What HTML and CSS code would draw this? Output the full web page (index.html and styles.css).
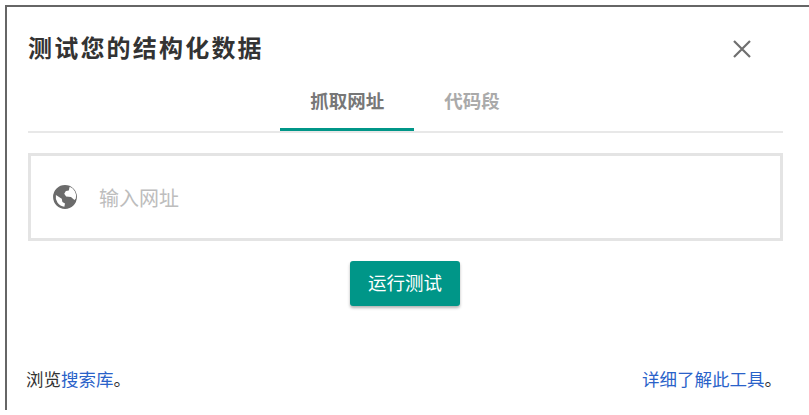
FILE: index.html
```html
<!DOCTYPE html>
<html lang="zh-CN">
<head>
  <meta charset="UTF-8" />
  <title>测试您的结构化数据</title>
  <link rel="stylesheet" href="styles.css">
</head>
<body>
  <div class="dialog">
    <div class="dialog-header">
      <div class="dialog-title">测试您的结构化数据</div>
      <svg class="close-icon" viewBox="0 0 20 20" width="20" height="20">
        <path d="M2 2 L18 18 M18 2 L2 18" fill="none" stroke="#6f6f6f" stroke-width="2.2"/>
      </svg>
    </div>
    <div class="tabs">
      <div class="tab tab-active">抓取网址</div>
      <div class="tab">代码段</div>
    </div>
    <div class="url-box">
      <svg class="globe-icon" viewBox="0 0 24 24" width="26" height="26">
        <path fill="#6b6b6b" d="M12 1a11 11 0 1 0 0 22 11 11 0 0 0 0-22zM3.600 10.200 9 13.500l.6 3 2.400 1.600-.6 3a9.200 9.200 0 0 1-7.800-10.900zM20.700 14.800l-3.200-2.800-4.500-.5-1.700-2.500 1.500-2.500 2.700-.6.800-3.300a9.200 9.200 0 0 1 5.700 10.800z"/>
      </svg>
      <div class="url-placeholder">输入网址</div>
    </div>
    <div class="run-row">
      <button class="run-btn" type="button">运行测试</button>
    </div>
    <div class="dialog-footer">
      <div>浏览<a href="#">搜索库</a>。</div>
      <div><a href="#">详细了解此工具</a>。</div>
    </div>
  </div>
</body>
</html>
```

FILE: styles.css
```css
html, body {
  margin: 0;
  padding: 0;
  background: #fff;
}
body {
  padding: 5px 0 0 5px;
  height: 410px;
  box-sizing: border-box;
  overflow: hidden;
  font-family: "Noto Sans CJK SC", "Liberation Sans", sans-serif;
  color: #333;
}
.dialog {
  height: 405px;
  box-sizing: border-box;
  border-top: 2px solid #666;
  border-left: 2px solid #666;
  padding: 0 26px 0 21px;
  width: 804px;
}
.dialog-header {
  display: flex;
  justify-content: space-between;
  align-items: center;
  height: 82px;
}
.dialog-title {
  font-size: 24px;
  font-weight: 700;
  letter-spacing: 2.200px;
  color: #333;
  line-height: 32px;
  padding-bottom: 2px;
}
.close-icon {
  margin: 2px 31px 0 0;
}
.tabs {
  display: flex;
  justify-content: center;
  height: 43px;
  padding-right: 1px;
  border-bottom: 2px solid #e8e8e8;
  margin-top: -1px;
}
.tab {
  padding: 0 30px;
  height: 43px;
  line-height: 24px;
  font-size: 18.500px;
  font-weight: 700;
  color: #aaa;
}
.tab-active {
  color: #777;
  height: 40px;
  border-bottom: 3px solid #009688;
}
.url-box {
  margin-top: 20px;
  height: 88px;
  box-sizing: border-box;
  border: 3px solid #e4e4e4;
  display: flex;
  align-items: center;
  padding-left: 21px;
}
.url-placeholder {
  margin-left: 21px;
  font-size: 20px;
  color: #bdbdbd;
}
.run-row {
  display: flex;
  justify-content: center;
  padding-right: 1px;
  margin-top: 20px;
}
.run-btn {
  width: 110px;
  height: 45px;
  border: none;
  border-radius: 3px;
  padding: 0 0 4px;
  background: #009688;
  color: #fff;
  font-family: inherit;
  font-size: 18.500px;
  box-shadow: 0 2px 3px rgba(0,0,0,0.3);
}
.dialog-footer {
  display: flex;
  justify-content: space-between;
  margin: 60px 0 0 -2px;
  padding-right: 1px;
  font-size: 17.500px;
  color: #333;
}
.dialog-footer a {
  color: #2a62c9;
  text-decoration: none;
}
```
